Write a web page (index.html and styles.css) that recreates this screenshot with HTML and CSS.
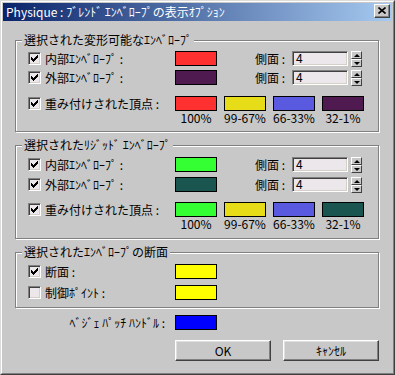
FILE: index.html
```html
<!DOCTYPE html>
<html lang="ja">
<head>
<meta charset="utf-8">
<link rel="stylesheet" href="styles.css">
</head>
<body>
<div class="window">
  <div class="frame">
    <div class="titlebar">
      <span class="title">Physique : ﾌﾞﾚﾝﾄﾞ ｴﾝﾍﾞﾛｰﾌﾟの表示ｵﾌﾟｼｮﾝ</span>
      <span class="close"><svg width="8" height="7" viewBox="0 0 8 7"><path d="M0.5 0.5 L7.5 6.5 M7.5 0.5 L0.5 6.5" stroke="#000" stroke-width="1.6" fill="none"/></svg></span>
    </div>
    <div class="content">
      <div class="group">
        <div class="group-title">選択された変形可能なｴﾝﾍﾞﾛｰﾌﾟ</div>
        <div class="rows">
          <div class="row">
            <span class="check"><svg width="7" height="7" viewBox="0 0 7 7"><path d="M0 2h1v3h-1zM1 3h1v3h-1zM2 4h1v3h-1zM3 3h1v3h-1zM4 2h1v3h-1zM5 1h1v3h-1zM6 0h1v3h-1z" fill="#000"/></svg></span>
            <span class="label">内部ｴﾝﾍﾞﾛｰﾌﾟ :</span>
            <span class="swatch red"></span>
            <span class="side">側面 :</span>
            <span class="edit">4</span>
            <span class="spin"><span class="spin-btn"><span class="tri-up"></span></span><span class="spin-btn"><span class="tri-down"></span></span></span>
          </div>
          <div class="row">
            <span class="check"><svg width="7" height="7" viewBox="0 0 7 7"><path d="M0 2h1v3h-1zM1 3h1v3h-1zM2 4h1v3h-1zM3 3h1v3h-1zM4 2h1v3h-1zM5 1h1v3h-1zM6 0h1v3h-1z" fill="#000"/></svg></span>
            <span class="label">外部ｴﾝﾍﾞﾛｰﾌﾟ :</span>
            <span class="swatch purple"></span>
            <span class="side">側面 :</span>
            <span class="edit">4</span>
            <span class="spin"><span class="spin-btn"><span class="tri-up"></span></span><span class="spin-btn"><span class="tri-down"></span></span></span>
          </div>
          <div class="row weighted">
            <span class="check"><svg width="7" height="7" viewBox="0 0 7 7"><path d="M0 2h1v3h-1zM1 3h1v3h-1zM2 4h1v3h-1zM3 3h1v3h-1zM4 2h1v3h-1zM5 1h1v3h-1zM6 0h1v3h-1z" fill="#000"/></svg></span>
            <span class="label">重み付けされた頂点 :</span>
            <div class="swatches">
              <span class="swatch red"></span>
              <span class="swatch yellow2"></span>
              <span class="swatch blue2"></span>
              <span class="swatch purple"></span>
              <span class="pct">100%</span>
              <span class="pct">99-67%</span>
              <span class="pct">66-33%</span>
              <span class="pct">32-1%</span>
            </div>
          </div>
        </div>
      </div>

      <div class="group next rigid">
        <div class="group-title">選択されたﾘｼﾞｯﾄﾞ ｴﾝﾍﾞﾛｰﾌﾟ</div>
        <div class="rows">
          <div class="row">
            <span class="check"><svg width="7" height="7" viewBox="0 0 7 7"><path d="M0 2h1v3h-1zM1 3h1v3h-1zM2 4h1v3h-1zM3 3h1v3h-1zM4 2h1v3h-1zM5 1h1v3h-1zM6 0h1v3h-1z" fill="#000"/></svg></span>
            <span class="label">内部ｴﾝﾍﾞﾛｰﾌﾟ :</span>
            <span class="swatch green"></span>
            <span class="side">側面 :</span>
            <span class="edit">4</span>
            <span class="spin"><span class="spin-btn"><span class="tri-up"></span></span><span class="spin-btn"><span class="tri-down"></span></span></span>
          </div>
          <div class="row">
            <span class="check"><svg width="7" height="7" viewBox="0 0 7 7"><path d="M0 2h1v3h-1zM1 3h1v3h-1zM2 4h1v3h-1zM3 3h1v3h-1zM4 2h1v3h-1zM5 1h1v3h-1zM6 0h1v3h-1z" fill="#000"/></svg></span>
            <span class="label">外部ｴﾝﾍﾞﾛｰﾌﾟ :</span>
            <span class="swatch teal"></span>
            <span class="side">側面 :</span>
            <span class="edit">4</span>
            <span class="spin"><span class="spin-btn"><span class="tri-up"></span></span><span class="spin-btn"><span class="tri-down"></span></span></span>
          </div>
          <div class="row weighted">
            <span class="check"><svg width="7" height="7" viewBox="0 0 7 7"><path d="M0 2h1v3h-1zM1 3h1v3h-1zM2 4h1v3h-1zM3 3h1v3h-1zM4 2h1v3h-1zM5 1h1v3h-1zM6 0h1v3h-1z" fill="#000"/></svg></span>
            <span class="label">重み付けされた頂点 :</span>
            <div class="swatches">
              <span class="swatch green"></span>
              <span class="swatch yellow2"></span>
              <span class="swatch blue2"></span>
              <span class="swatch teal"></span>
              <span class="pct">100%</span>
              <span class="pct">99-67%</span>
              <span class="pct">66-33%</span>
              <span class="pct">32-1%</span>
            </div>
          </div>
        </div>
      </div>

      <div class="group next section">
        <div class="group-title">選択されたｴﾝﾍﾞﾛｰﾌﾟの断面</div>
        <div class="rows">
          <div class="row">
            <span class="check"><svg width="7" height="7" viewBox="0 0 7 7"><path d="M0 2h1v3h-1zM1 3h1v3h-1zM2 4h1v3h-1zM3 3h1v3h-1zM4 2h1v3h-1zM5 1h1v3h-1zM6 0h1v3h-1z" fill="#000"/></svg></span>
            <span class="label">断面 :</span>
            <span class="swatch yellow"></span>
          </div>
          <div class="row">
            <span class="check"></span>
            <span class="label">制御ﾎﾟｲﾝﾄ :</span>
            <span class="swatch yellow"></span>
          </div>
        </div>
      </div>

      <div class="bezier">
        <span class="bezier-label">ﾍﾞｼﾞｪ ﾊﾟｯﾁ ﾊﾝﾄﾞﾙ :</span>
        <span class="swatch blue"></span>
      </div>

      <div class="buttons">
        <span class="btn">OK</span>
        <span class="btn">ｷｬﾝｾﾙ</span>
      </div>
    </div>
  </div>
</div>
</body>
</html>
```

FILE: styles.css
```css
* { box-sizing: border-box; }
html, body { margin: 0; padding: 0; }
body {
  width: 395px;
  height: 375px;
  overflow: hidden;
  background: #c8c8c8;
  font-family: "Noto Sans CJK JP", sans-serif;
  font-size: 12px;
  color: #000;
}
.window {
  width: 395px;
  height: 375px;
  border: 1px solid;
  border-color: #dcdcdc #404040 #404040 #dcdcdc;
  background: #c8c8c8;
}
.frame {
  height: 100%;
  border: 1px solid;
  border-color: #ffffff #808080 #808080 #ffffff;
  padding: 1px;
  display: flex;
  flex-direction: column;
}
.titlebar {
  height: 18px;
  flex: none;
  background: linear-gradient(to right, #0a246a, #a6caf0);
  display: flex;
  align-items: flex-start;
  justify-content: space-between;
  padding: 0 2px 0 3px;
  color: #fff;
}
.title { line-height: 17px; white-space: nowrap; }
.close {
  margin-top: 1px;
  width: 16px;
  height: 14px;
  background: #c8c8c8;
  border: 1px solid;
  border-color: #ffffff #404040 #404040 #ffffff;
  box-shadow: inset -1px -1px 0 #808080;
  display: flex;
  align-items: center;
  justify-content: center;
  padding-bottom: 1px;
}
.close svg { display: block; }
.content {
  flex: 1;
  padding: 19px 13px 0 12px;
  display: flex;
  flex-direction: column;
}
.group {
  border: 1px solid #808080;
  box-shadow: inset 1px 1px 0 #ffffff, 1px 1px 0 #ffffff;
  padding: 0 0 7px 12px;
  display: flex;
  flex-direction: column;
}
.group.next { margin-top: 13px; }
.group.rigid { padding-bottom: 8px; }
.group-title {
  align-self: flex-start;
  margin: -8px 0 0 -6px;
  padding: 0 2px;
  background: #c8c8c8;
  height: 14px;
  line-height: 14px;
  white-space: nowrap;
}
.rows { margin-top: 4px; display: flex; flex-direction: column; }
.rigid .rows { margin-top: 5px; }
.section .rows { margin-top: 5px; }
.row { display: flex; align-items: flex-start; height: 15px; }
.row + .row { margin-top: 4px; }
.rigid .row + .row { margin-top: 5px; }
.section .row + .row { margin-top: 6px; }
.row.weighted { margin-top: 11px; height: auto; }
.rigid .row.weighted { margin-top: 10px; }
.check {
  width: 13px;
  height: 13px;
  margin-top: 1px;
  flex: none;
  background: #ebe7eb;
  border: 1px solid;
  border-color: #808080 #ffffff #ffffff #808080;
  box-shadow: inset 1px 1px 0 #404040, inset -1px -1px 0 #d4d0c8;
  padding: 2px 0 0 2px;
}
.check svg { display: block; }
.label { width: 130px; margin-left: 4px; line-height: 15px; white-space: nowrap; flex: none; }
.swatch { display: block; width: 42px; height: 15px; border: 1px solid #000; flex: none; }
.red { background: #ff3030; }
.purple { background: #4f1a50; }
.yellow2 { background: #e6dc18; }
.blue2 { background: #5a5ae0; }
.green { background: #33ff33; }
.teal { background: #1a5550; }
.yellow { background: #ffff00; }
.blue { background: #0000ff; }
.side { margin-left: 38px; width: 37px; line-height: 15px; white-space: nowrap; flex: none; }
.edit {
  width: 56px;
  height: 15px;
  flex: none;
  background: #ebe7eb;
  border: 1px solid;
  border-color: #808080 #ffffff #ffffff #808080;
  box-shadow: inset 1px 1px 0 #404040, inset -1px -1px 0 #d4d0c8;
  padding-left: 3px;
  line-height: 12px;
}
.spin {
  margin-left: 3px;
  width: 11px;
  height: 16px;
  display: flex;
  flex-direction: column;
  flex: none;
}
.spin-btn {
  flex: 1;
  border: 1px solid;
  border-color: #ffffff #404040 #404040 #ffffff;
  background: #c8c8c8;
  display: flex;
  align-items: center;
  justify-content: center;
}
.tri-up { width: 0; height: 0; border-left: 3px solid transparent; border-right: 3px solid transparent; border-bottom: 3px solid #000; }
.tri-down { width: 0; height: 0; border-left: 3px solid transparent; border-right: 3px solid transparent; border-top: 3px solid #000; }
.swatches {
  display: grid;
  grid-template-columns: repeat(4, 42px);
  column-gap: 7px;
}
.pct { justify-self: center; line-height: 13px; white-space: nowrap; }
.bezier { display: flex; align-items: center; margin-top: 7px; }
.bezier-label { width: 150px; text-align: right; margin-right: 10px; white-space: nowrap; line-height: 15px; }
.buttons { display: flex; justify-content: flex-end; gap: 12px; margin-top: 10px; }
.btn {
  width: 96px;
  height: 21px;
  border: 1px solid;
  border-color: #ffffff #404040 #404040 #ffffff;
  box-shadow: inset -1px -1px 0 #808080, inset 1px 1px 0 #dfdfdf;
  background: #c8c8c8;
  display: flex;
  align-items: center;
  justify-content: center;
  line-height: 15px;
}
```
